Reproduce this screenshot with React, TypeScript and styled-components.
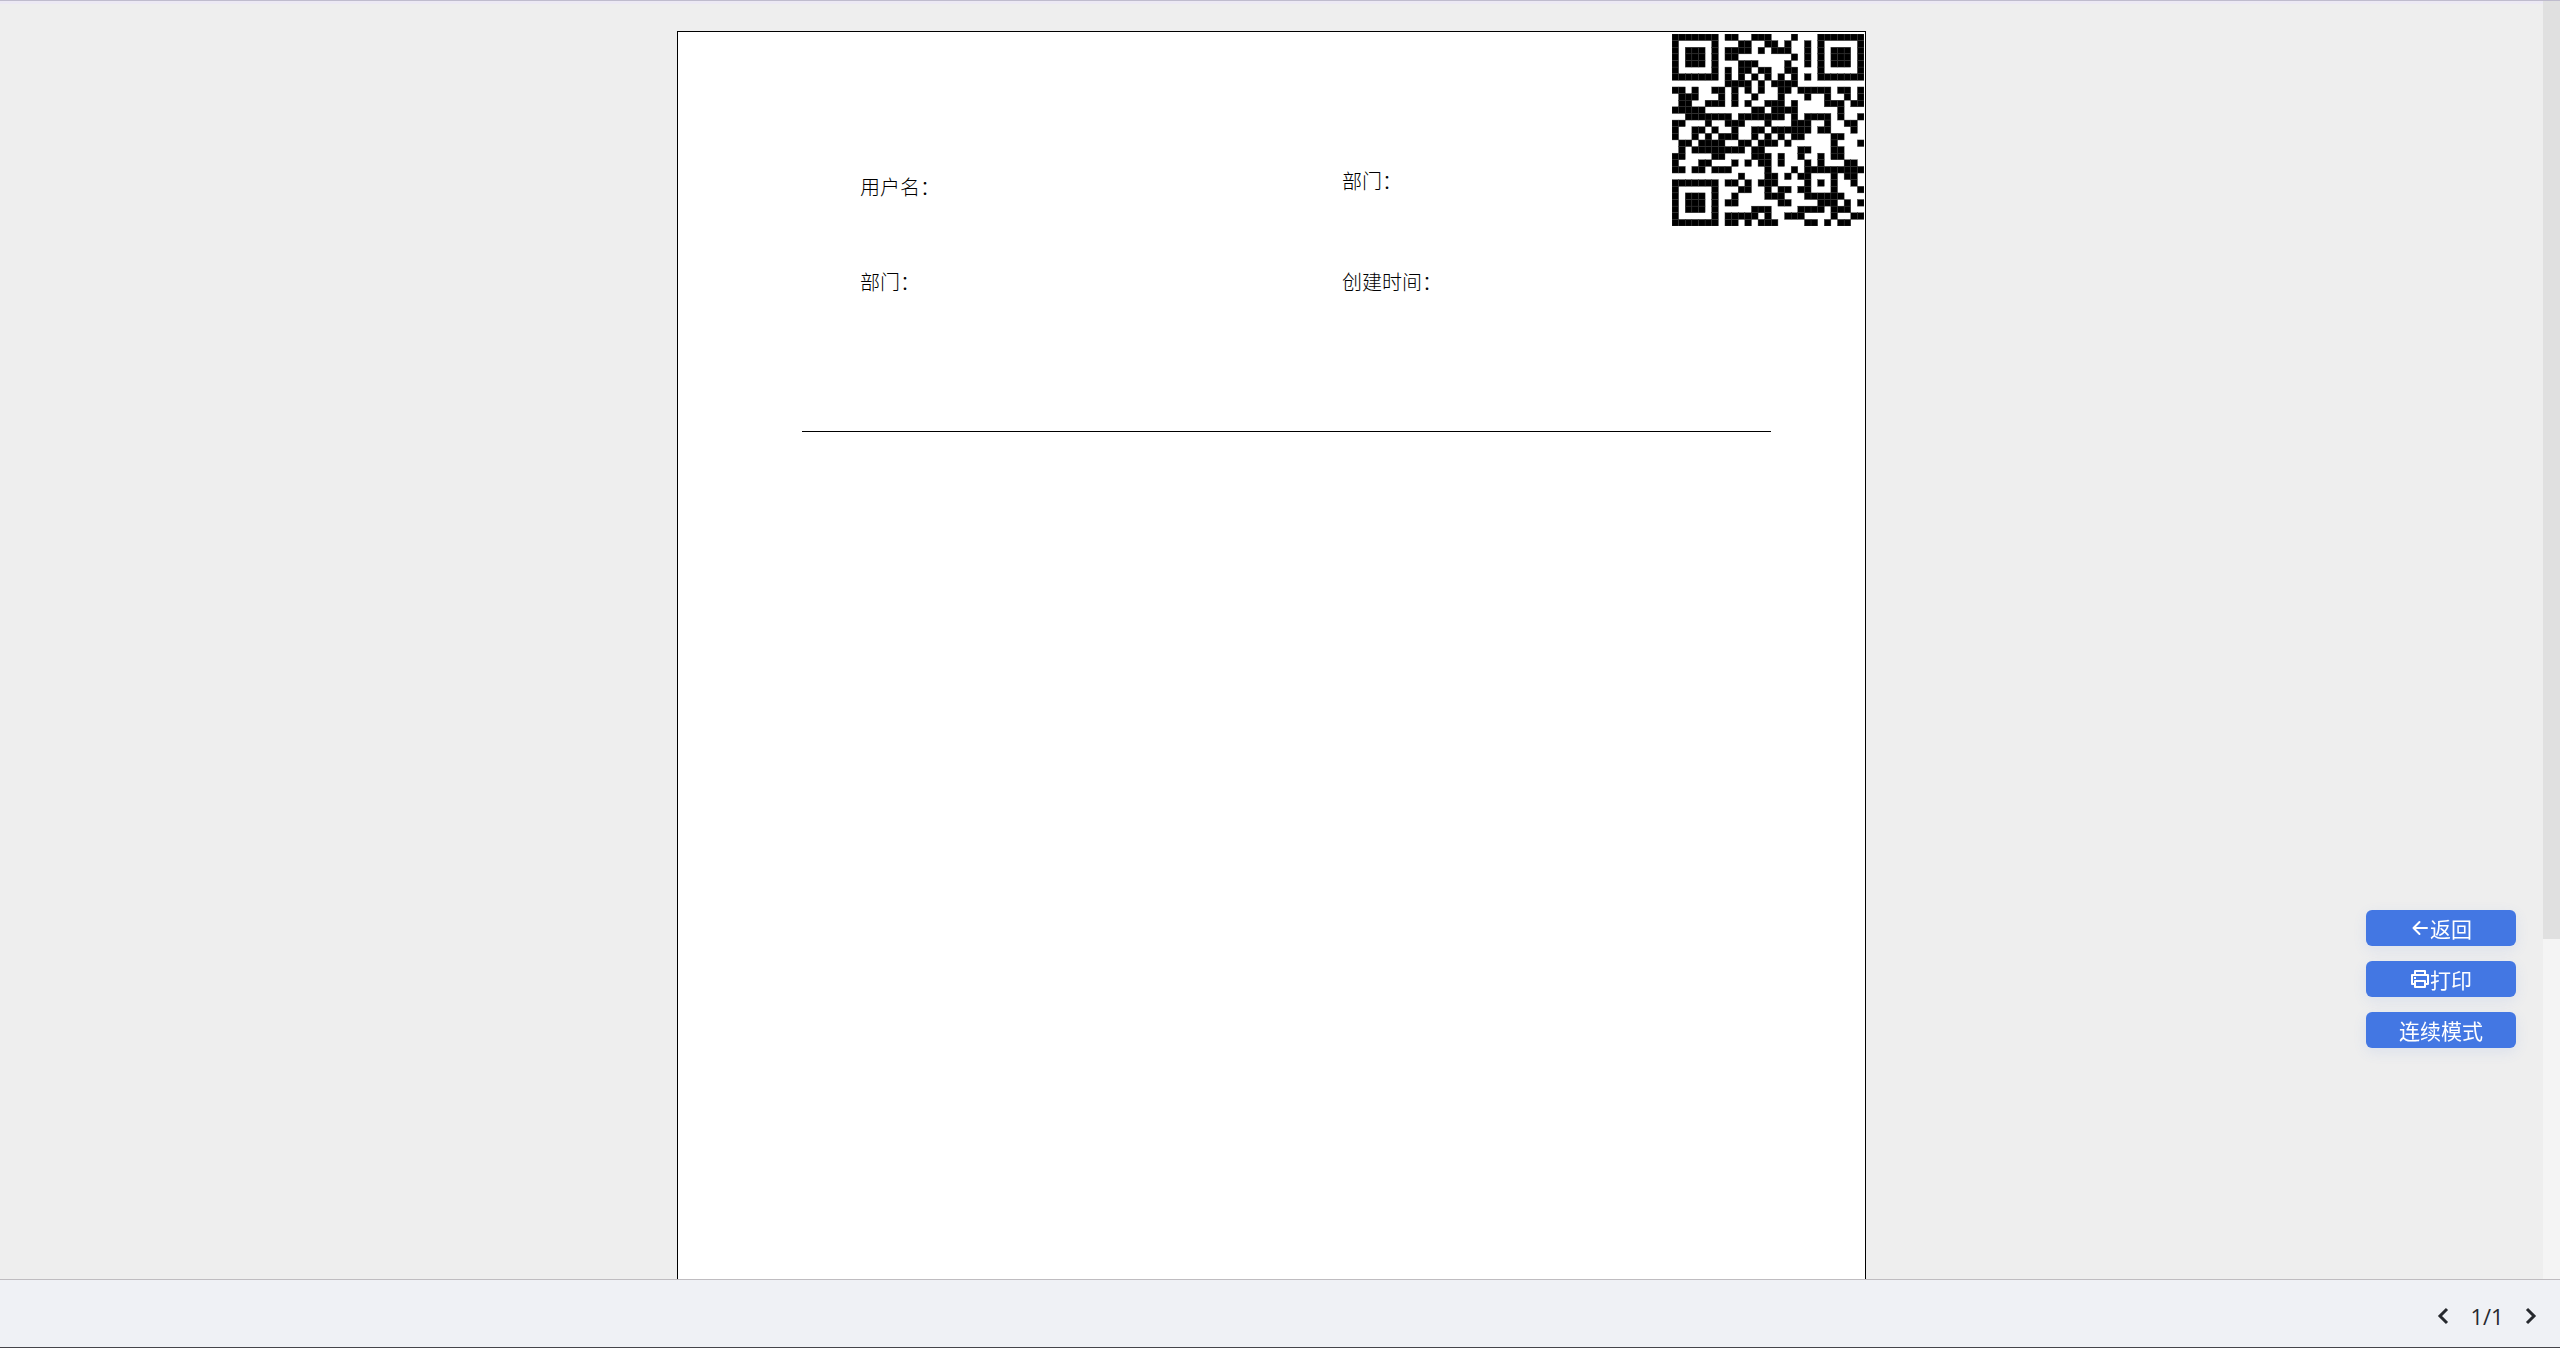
import React from "react";
import styled, { createGlobalStyle } from "styled-components";

const GlobalStyle = createGlobalStyle`
  * { box-sizing: border-box; }
  html, body { margin: 0; padding: 0; }
  body {
    font-family: "Noto Sans", "Noto Sans CJK SC", sans-serif;
    color: #000;
    background: #eee;
    overflow: hidden;
  }
`;

const Screen = styled.div`
  display: flex;
  flex-direction: column;
  height: 100vh;
  border-top: 1px solid #bfbccd;
  border-bottom: 1px solid #45454a;
`;

const Viewer = styled.div`
  flex: 1;
  min-height: 0;
  display: flex;
`;

const Canvas = styled.main`
  flex: 1;
  min-width: 0;
  overflow: hidden;
  padding: 27px 0 30px;
  background: #eee;
  border-top: 3px solid #ece9f4;
`;

const ScrollTrack = styled.div`
  width: 17px;
  background: #f4f4f4;
`;

const ScrollThumb = styled.div`
  height: 938px;
  background: #e0e0e0;
`;

const Paper = styled.article`
  width: 1189px;
  min-height: 1682px;
  margin: 0 auto;
  background: #fff;
  border: 1px solid #000;
`;

const PaperHead = styled.header`
  display: flex;
  align-items: flex-start;
  padding: 2px 1px 0 182px;
`;

const FieldColumn = styled.div<{ $width: number; $top: number; $gap: number }>`
  display: flex;
  flex-direction: column;
  width: ${(p) => p.$width}px;
  padding-top: ${(p) => p.$top}px;
  gap: ${(p) => p.$gap}px;
`;

const Field = styled.span`
  font-family: "Noto Sans CJK SC", sans-serif;
  font-size: 20px;
  font-weight: 300;
  line-height: 28px;
`;

const Code = styled.svg`
  display: block;
  flex: none;
  width: 192px;
  height: 192px;
  margin-left: auto;
`;

const Rule = styled.hr`
  width: 969px;
  height: 1px;
  margin: 135px 0 0 124px;
  border: 0;
  background: #000;
`;

const Actions = styled.div`
  position: fixed;
  right: 44px;
  bottom: 300px;
  display: flex;
  flex-direction: column;
  gap: 15px;
`;

const ActionButton = styled.button`
  display: flex;
  align-items: center;
  justify-content: center;
  width: 150px;
  height: 36px;
  padding: 0;
  border: 0;
  border-radius: 6px;
  background: #4377e3;
  color: #fff;
  font-family: "Noto Sans CJK SC", sans-serif;
  font-size: 21px;
  line-height: 36px;
  box-shadow: 0 4px 14px rgba(67, 119, 227, 0.1);
  cursor: pointer;

  svg {
    display: block;
    width: 20px;
    height: 20px;
  }
`;

const Pager = styled.footer`
  display: flex;
  align-items: center;
  justify-content: flex-end;
  height: 68px;
  padding: 4px 17px 0 0;
  background: #eff1f5;
  border-top: 1px solid #bfbcc0;
  color: #26292e;
`;

const PageButton = styled.button`
  display: flex;
  align-items: center;
  justify-content: center;
  width: 24px;
  height: 24px;
  padding: 0;
  border: 0;
  background: none;
  color: inherit;
  cursor: pointer;
`;

const PageCount = styled.span`
  width: 64px;
  text-align: center;
  font-family: "Open Sans", "Noto Sans", sans-serif;
  font-size: 22px;
  line-height: 30px;
`;

const qrRows = [
  "#######.##..###...#...#######",
  "#.....#...##..##.#..#.#.....#",
  "#.###.#.####.#.###..#.#.###.#",
  "#.###.#.##........#.#.#.###.#",
  "#.###.#...###....#..#.#.###.#",
  "#.....#.#.##.##..##...#.....#",
  "#######.#.#.#.#.#.#.#.#######",
  "........####.#.####..........",
  "##.#..##.#.#.#..##.#####.##.#",
  ".###...#.#..#...#...#..#..#.#",
  ".##..###.#.#..###.#....###.##",
  "#####.......##.####......#...",
  "..#######.#######.#.####.#..#",
  "##...#..###...#...###..#..##.",
  "#..##.#..#..##.######.##...#.",
  "#..#.#.###..#.#.#.##....##...",
  ".##.####..##.###.#......#...#",
  ".#.########.##.....##...##...",
  "##....##....###.#..#..#.##...",
  "#...##...#.#.##.#...#.#...##.",
  "##.##.###.....#...#.#########",
  "..........#...##.#.##...#.##.",
  "#######.##.#.###....#.#.#..#.",
  "#.....#...##..#.##.##...#...#",
  "#.###.#..#....###...######...",
  "#.###.#.##......##....###.#.#",
  "#.###.#.....###....####.###..",
  "#.....#.#####.#..###....#..##",
  "#######.##.#.###....##.#.##..",
];

function QrCode() {
  return (
    <Code viewBox="0 0 29 29" role="img" aria-label="QR">
      {qrRows.flatMap((row, y) =>
        [...row].map((cell, x) =>
          cell === "#" ? (
            <rect key={`${x}-${y}`} x={x} y={y} width={1} height={1} stroke="#333" strokeWidth={0.06} />
          ) : null
        )
      )}
    </Code>
  );
}

function BackIcon() {
  return (
    <svg viewBox="0 0 20 20" fill="none" stroke="currentColor" strokeWidth="2" strokeLinecap="round" strokeLinejoin="round" aria-hidden="true">
      <path d="M17 10H3.5M9.5 4L3.5 10l6 6" />
    </svg>
  );
}

function PrintIcon() {
  return (
    <svg viewBox="0 0 20 20" fill="none" stroke="currentColor" strokeWidth="2" strokeLinejoin="round" aria-hidden="true">
      <path d="M5 15H2V6h16v9h-3M5 6V2h10v4M5 12h10v6H5zM4 9h2" />
    </svg>
  );
}

function Chevron({ d }: { d: string }) {
  return (
    <svg width="24" height="24" viewBox="0 0 24 24" fill="none" stroke="currentColor" strokeWidth="3" aria-hidden="true">
      <path d={d} />
    </svg>
  );
}

export default function App() {
  return (
    <>
      <GlobalStyle />
      <Screen>
        <Viewer>
          <Canvas>
            <Paper>
              <PaperHead>
                <FieldColumn $width={482} $top={139} $gap={67}>
                  <Field>用户名：</Field>
                  <Field>部门：</Field>
                </FieldColumn>
                <FieldColumn $width={240} $top={133} $gap={73}>
                  <Field>部门：</Field>
                  <Field>创建时间：</Field>
                </FieldColumn>
                <QrCode />
              </PaperHead>
              <Rule />
            </Paper>
          </Canvas>
          <ScrollTrack>
            <ScrollThumb />
          </ScrollTrack>
        </Viewer>
        <Pager>
          <PageButton type="button" aria-label="上一页">
            <Chevron d="M16 5L9 12l7 7" />
          </PageButton>
          <PageCount>1/1</PageCount>
          <PageButton type="button" aria-label="下一页">
            <Chevron d="M8 5l7 7-7 7" />
          </PageButton>
        </Pager>
      </Screen>
      <Actions>
        <ActionButton type="button">
          <BackIcon />
          返回
        </ActionButton>
        <ActionButton type="button">
          <PrintIcon />
          打印
        </ActionButton>
        <ActionButton type="button">连续模式</ActionButton>
      </Actions>
    </>
  );
}
